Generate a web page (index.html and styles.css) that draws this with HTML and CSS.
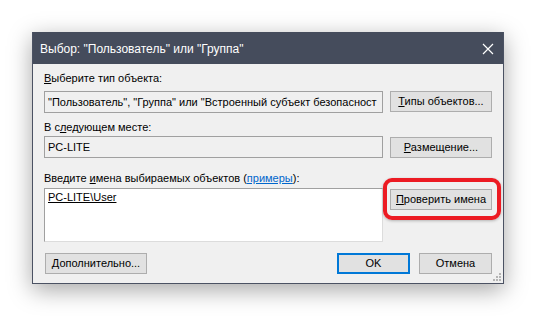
FILE: index.html
```html
<!DOCTYPE html>
<html lang="ru">
<head>
    <meta charset="UTF-8">
    <title>Выбор: "Пользователь" или "Группа"</title>
    <link rel="stylesheet" href="styles.css">
</head>
<body>
    <div class="window">
        <div class="titlebar">
            <span class="title">Выбор: "Пользователь" или "Группа"</span>
            <svg class="close" width="12" height="12" viewBox="0 0 12 12">
                <path d="M1 1 L11 11 M11 1 L1 11" stroke="#fff" stroke-width="1.2"/>
            </svg>
        </div>
        <div class="content">
            <div class="label"><u>В</u>ыберите тип объекта:</div>
            <div class="row">
                <div class="field">"Пользователь", "Группа" или "Встроенный субъект безопасност</div>
                <div class="btn"><u>Т</u>ипы объектов...</div>
            </div>

            <div class="label second">В с<u>л</u>едующем месте:</div>
            <div class="row">
                <div class="field">PC-LITE</div>
                <div class="btn shift"><u>Р</u>азмещение...</div>
            </div>

            <div class="label third">Введите <u>и</u>мена выбираемых объектов (<a class="link">примеры</a>):</div>
            <div class="row">
                <div class="names"><u>PC-LITE\User</u></div>
                <div class="check-wrap">
                    <div class="btn check"><u>П</u>роверить имена</div>
                    <div class="ring"></div>
                </div>
            </div>

            <div class="bottom">
                <div class="btn wide"><u>Д</u>ополнительно...</div>
                <div class="actions">
                    <div class="btn small default">OK</div>
                    <div class="btn small">Отмена</div>
                </div>
            </div>
        </div>
        <svg class="grip" width="8" height="8" viewBox="0 0 8 8">
            <rect x="6" y="0" width="2" height="2" fill="#b4b4b4"/>
            <rect x="3" y="3" width="2" height="2" fill="#b4b4b4"/>
            <rect x="6" y="3" width="2" height="2" fill="#b4b4b4"/>
            <rect x="0" y="6" width="2" height="2" fill="#b4b4b4"/>
            <rect x="3" y="6" width="2" height="2" fill="#b4b4b4"/>
            <rect x="6" y="6" width="2" height="2" fill="#b4b4b4"/>
        </svg>
    </div>
</body>
</html>
```

FILE: styles.css
```css
body {
    margin: 0;
    padding: 32px;
    background: #fff;
    font-family: "Liberation Sans", Arial, sans-serif;
    font-size: 11px;
    color: #000;
}
.window {
    position: relative;
    width: 470px;
    border: 1px solid #4b5263;
    background: #f0f0f0;
    box-shadow: 0 6px 22px rgba(0, 0, 0, 0.35);
}
.titlebar {
    height: 31px;
    background: #454c5c;
    color: #fff;
    display: flex;
    align-items: center;
    justify-content: space-between;
    padding: 0 9px 0 7px;
    margin-top: -1px;
    border-top: 1px solid #454c5c;
}
.title {
    font-size: 12px;
}
.content {
    padding: 7px 11px 9px 11px;
}
.label {
    height: 14px;
    line-height: 14px;
    margin-bottom: 6px;
}
.label.second {
    margin-top: 7px;
    margin-bottom: 2px;
}
.label.third {
    margin-top: 13px;
    margin-bottom: 3px;
}
.link {
    color: #0066cc;
    text-decoration: underline;
}
.row {
    display: flex;
    align-items: flex-start;
    gap: 7px;
}
.field {
    height: 20px;
    line-height: 20px;
    padding-left: 3px;
    width: 334px;
    border: 1px solid #a0a0a0;
    background: #f0f0f0;
    white-space: nowrap;
    overflow: hidden;
}
.names {
    width: 334px;
    height: 52px;
    padding-left: 3px;
    line-height: 16px;
    border: 1px solid #a0a0a0;
    border-color: #a0a0a0 #dcdcdc #dcdcdc #a0a0a0;
    background: #fff;
}
.btn {
    width: 100px;
    height: 19px;
    line-height: 19px;
    text-align: center;
    background: #e1e1e1;
    border: 1px solid #adadad;
}
.btn.shift {
    margin-top: 1px;
}
.check-wrap {
    position: relative;
    margin-top: 1px;
}
.ring {
    position: absolute;
    left: -7px;
    top: -11px;
    width: 110px;
    height: 34px;
    border: 4px solid #ec1b23;
    border-radius: 9px;
    box-shadow: 0 1px 3px rgba(0, 0, 0, 0.25);
}
.bottom {
    display: flex;
    justify-content: space-between;
    margin-top: 11px;
}
.btn.wide {
    margin-left: 1px;
}
.actions {
    display: flex;
    gap: 9px;
}
.btn.small {
    width: 71px;
}
.btn.default {
    border: 2px solid #0078d7;
    width: 69px;
    height: 17px;
    line-height: 17px;
}
.grip {
    position: absolute;
    right: 2px;
    bottom: 2px;
}
```
